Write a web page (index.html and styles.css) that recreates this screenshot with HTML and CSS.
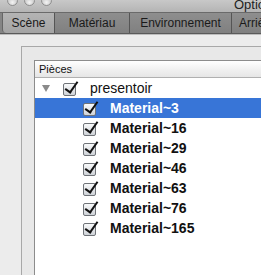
FILE: index.html
```html
<html lang="fr">
<head>
  <meta charset="UTF-8">
  <title>Options</title>
  <link rel="stylesheet" href="styles.css">
</head>
<body>
  <div class="window">
    <div class="titlebar">
      <span class="light"></span>
      <span class="light"></span>
      <span class="light"></span>
      <span class="title">Options</span>
    </div>

    <div class="tabs">
      <div class="tab selected tab-scene">Scène</div>
      <div class="tab tab-mat">Matériau</div>
      <div class="tab tab-env">Environnement</div>
      <div class="tab tab-arr">Arrière-plan</div>
    </div>

    <div class="content">
      <div class="group">
        <div class="list">
          <div class="list-header">Pièces</div>

          <div class="row parent">
            <span class="disclosure"></span>
            <span class="check"></span>
            <span class="label">presentoir</span>
          </div>
          <div class="row child active">
            <span class="check"></span>
            <span class="label">Material~3</span>
          </div>
          <div class="row child">
            <span class="check"></span>
            <span class="label">Material~16</span>
          </div>
          <div class="row child">
            <span class="check"></span>
            <span class="label">Material~29</span>
          </div>
          <div class="row child">
            <span class="check"></span>
            <span class="label">Material~46</span>
          </div>
          <div class="row child">
            <span class="check"></span>
            <span class="label">Material~63</span>
          </div>
          <div class="row child">
            <span class="check"></span>
            <span class="label">Material~76</span>
          </div>
          <div class="row child">
            <span class="check"></span>
            <span class="label">Material~165</span>
          </div>
        </div>
      </div>
    </div>
  </div>
</body>
</html>
```

FILE: styles.css
```css
body {
  margin: 0;
  padding: 0;
  width: 261px;
  height: 275px;
  overflow: hidden;
  font-family: "Liberation Sans", Arial, sans-serif;
  color: #111;
  background: #ececec;
}

.window {
  width: 261px;
  height: 275px;
  display: flex;
  flex-direction: column;
  overflow: hidden;
}

.titlebar {
  height: 12px;
  flex-shrink: 0;
  display: flex;
  align-items: flex-start;
  background: linear-gradient(#c8c8c8, #b4b4b4);
  overflow: hidden;
  padding-left: 7px;
}

.light {
  width: 11px;
  height: 11px;
  margin-top: -5px;
  margin-right: 6px;
  border-radius: 50%;
  border: 1px solid #8e8e8e;
  background: radial-gradient(circle at 50% 70%, #f4f4f4, #b0b0b0);
  box-sizing: border-box;
  flex-shrink: 0;
}

.title {
  margin-left: 176px;
  margin-top: -3px;
  font-size: 13px;
  color: #222;
  white-space: nowrap;
}

.tabs {
  flex-shrink: 0;
  display: flex;
  background: #858585;
  border-top: 1px solid #6a6a6a;
  border-bottom: 1px solid #5a5a5a;
  box-sizing: border-box;
  height: 22px;
  padding-left: 2px;
  overflow: hidden;
}

.tab {
  flex-shrink: 0;
  box-sizing: border-box;
  border-right: 1px solid #555;
  font-size: 12px;
  line-height: 20px;
  text-align: center;
  color: #1a1a1a;
  white-space: nowrap;
  overflow: hidden;
  background: linear-gradient(#8e8e8e, #808080);
}

.tab.selected {
  background: linear-gradient(#b4b4b4, #a4a4a4);
  border-bottom-left-radius: 4px;
  border-left: 1px solid #666;
}

.tab-scene { width: 53px; }
.tab-mat { width: 75px; }
.tab-env { width: 102px; }
.tab-arr { width: 60px; text-align: left; padding-left: 7px; }

.content {
  flex: 1;
  background: #ececec;
  padding: 11px 0 0 21px;
  border-top: 1px solid #bdbdbd;
}

.group {
  height: 100%;
  box-sizing: border-box;
  border-top: 1px solid #a8a8a8;
  border-left: 1px solid #a8a8a8;
  background: #e8e8e8;
  padding: 13px 0 0 12px;
}

.list {
  height: 100%;
  background: #fff;
  border-top: 1px solid #8c8c8c;
  border-left: 1px solid #8c8c8c;
}

.list-header {
  height: 17px;
  box-sizing: border-box;
  border-bottom: 1px solid #b0b0b0;
  background: linear-gradient(#ffffff, #f0f0f0 55%, #e6e6e6);
  font-size: 11px;
  line-height: 16px;
  padding-left: 4px;
  color: #111;
}

.row {
  height: 20px;
  display: flex;
  align-items: center;
  font-size: 14px;
}

.row.parent {
  padding-left: 7px;
}

.row.child {
  padding-left: 48px;
  font-weight: bold;
}

.row.active {
  background: #3875d7;
  color: #fff;
}

.disclosure {
  width: 0;
  height: 0;
  border-left: 4px solid transparent;
  border-right: 4px solid transparent;
  border-top: 7px solid #8a8a8a;
  margin-right: 13px;
}

.check {
  position: relative;
  width: 13px;
  height: 13px;
  margin-top: 2px;
  box-sizing: border-box;
  border: 1px solid #6f7378;
  border-radius: 2px;
  background: linear-gradient(#f8f9fa, #cfd3d8);
  margin-right: 14px;
  flex-shrink: 0;
}

.check::after {
  content: "";
  position: absolute;
  left: 4px;
  top: -5px;
  width: 5px;
  height: 12px;
  border-right: 2px solid #111;
  border-bottom: 2px solid #111;
  transform: rotate(35deg);
  transform-origin: center;
}

.label {
  white-space: nowrap;
}
```
